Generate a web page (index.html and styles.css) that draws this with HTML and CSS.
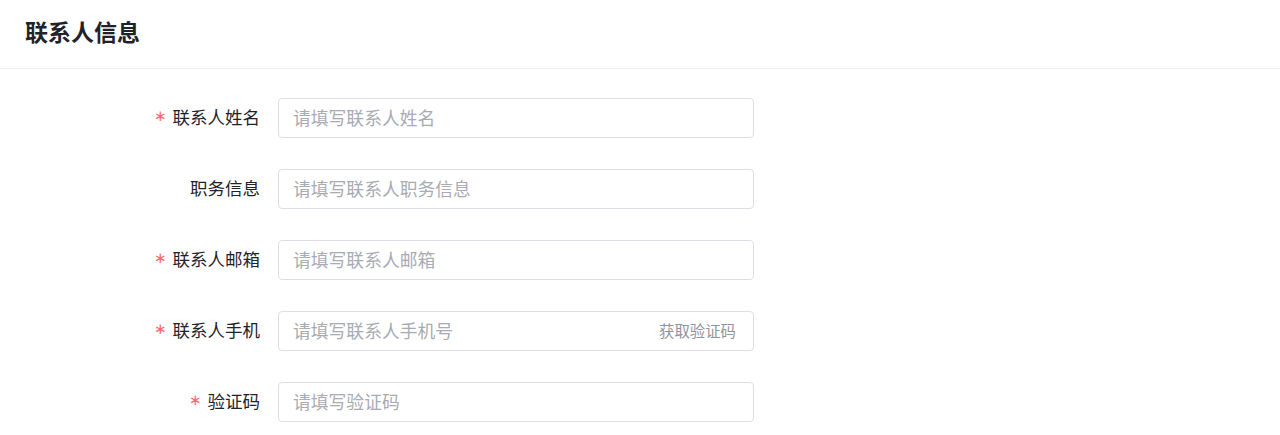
FILE: index.html
```html
<!DOCTYPE html>
<html lang="zh-CN">
<head>
<meta charset="utf-8">
<title>联系人信息</title>
<link rel="stylesheet" href="styles.css">
</head>
<body>
<div class="page">
  <div class="header"><h1 class="title">联系人信息</h1></div>
  <form class="form">
    <div class="row">
      <label class="label"><span class="req">∗</span>联系人姓名</label>
      <div class="field"><input class="input" placeholder="请填写联系人姓名"></div>
    </div>
    <div class="row">
      <label class="label">职务信息</label>
      <div class="field"><input class="input" placeholder="请填写联系人职务信息"></div>
    </div>
    <div class="row">
      <label class="label"><span class="req">∗</span>联系人邮箱</label>
      <div class="field"><input class="input" placeholder="请填写联系人邮箱"></div>
    </div>
    <div class="row">
      <label class="label"><span class="req">∗</span>联系人手机</label>
      <div class="field"><input class="input" placeholder="请填写联系人手机号"><span class="suffix">获取验证码</span></div>
    </div>
    <div class="row">
      <label class="label"><span class="req">∗</span>验证码</label>
      <div class="field"><input class="input" placeholder="请填写验证码"></div>
    </div>
  </form>
</div>
</body>
</html>
```

FILE: styles.css
```css
* { box-sizing: border-box; }
html, body { margin: 0; padding: 0; background: #fff; }
body { font-family: "Noto Sans CJK SC", "Noto Sans", sans-serif; color: #1f2329; }
.header { height: 69px; border-bottom: 1px solid #ebeef5; display: flex; align-items: center; padding: 0 25px; }
.title { margin: 0; font-size: 23px; font-weight: 700; color: #1f2329; line-height: 1; padding-bottom: 5px; }
.form { padding-top: 29px; display: flex; flex-direction: column; gap: 31px; }
.row { display: flex; align-items: center; gap: 18px; }
.label { width: 260px; font-size: 17.5px; font-weight: 400; line-height: 1; padding-bottom: 3px; color: #1f2329; display: flex; justify-content: flex-end; align-items: center; }
.req { color: #f56c6c; font-family: "DejaVu Sans", sans-serif; font-size: 15px; line-height: 1; margin-right: 6px; }
.field { position: relative; width: 476px; }
.input { width: 100%; height: 40px; border: 1px solid #dcdfe6; border-radius: 4px; padding: 0 14px 2px; font-family: inherit; font-size: 17.8px; color: #1f2329; outline: none; background: #fff; }
.input::placeholder { color: #a8abb2; }
.suffix { position: absolute; right: 18px; top: 50%; transform: translateY(-50%); margin-top: -1px; font-size: 15.4px; color: #909399; }
```
